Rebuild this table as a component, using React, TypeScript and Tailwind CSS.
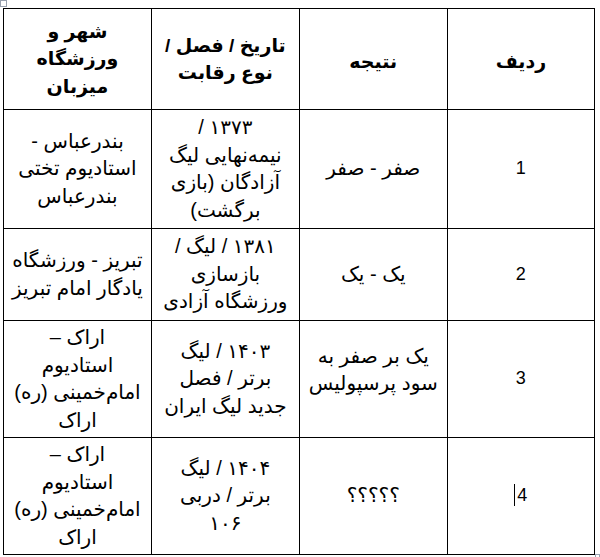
const font = { fontFamily: '"Liberation Sans", "DejaVu Sans", sans-serif' };

type Row = { no: string; result: string[]; date: string[]; venue: string[]; h: string; resultPad?: string };

const rows: Row[] = [
  {
    no: "1",
    result: ["صفر - صفر"],
    date: ["۱۳۷۳ /", "نیمه‌نهایی لیگ", "آزادگان (بازی", "برگشت)"],
    venue: ["بندرعباس -", "استادیوم تختی", "بندرعباس"],
    h: "h-[119px]",
  },
  {
    no: "2",
    result: ["یک - یک"],
    date: ["۱۳۸۱ / لیگ /", "بازسازی", "ورزشگاه آزادی"],
    venue: ["تبریز - ورزشگاه", "یادگار امام تبریز"],
    h: "h-[92px]",
  },
  {
    no: "3",
    result: ["یک بر صفر به", "سود پرسپولیس"],
    date: ["۱۴۰۳ / لیگ", "برتر / فصل", "جدید لیگ ایران"],
    venue: ["اراک –", "استادیوم", "امام‌خمینی (ره)", "اراک"],
    h: "h-[117px]",
    resultPad: "pb-[18px]",
  },
  {
    no: "4",
    result: ["؟؟؟؟؟"],
    date: ["۱۴۰۴ / لیگ", "برتر / دربی", "۱۰۶"],
    venue: ["اراک –", "استادیوم", "امام‌خمینی (ره)", "اراک"],
    h: "h-[117px]",
  },
];

const Lines = ({ lines }: { lines: string[] }) => (
  <>
    {lines.map((l, i) => (
      <div key={i} className="whitespace-nowrap">
        {l}
      </div>
    ))}
  </>
);

const cell = "border border-black align-middle text-center px-1 w-[148px]";

export default function App() {
  return (
    <div className="relative w-[600px] h-[557px] bg-white overflow-hidden" style={font}>
      {/* table move handle */}
      <div className="absolute left-0 top-0 w-[7px] h-[7px] border border-gray-400 bg-white" />
      <div className="pt-[8px] pl-[3px]">
        <table dir="rtl" className="border-collapse w-[592px] text-[20px] leading-[27.5px] text-black">
          <tbody>
            <tr className="h-[101px] font-bold text-[19px]">
              <td className={`${cell} pt-[6px]`}>ردیف</td>
              <td className={`${cell} pt-[6px]`}>نتیجه</td>
              <td className={cell}>
                <Lines lines={["تاریخ / فصل /", "نوع رقابت"]} />
              </td>
              <td className={cell}>
                <Lines lines={["شهر و", "ورزشگاه", "میزبان"]} />
              </td>
            </tr>
            {rows.map((r) => (
              <tr key={r.no} className={r.h}>
                <td className={`${cell} text-[18px]`}>
                  {r.no === "4" ? (
                    <span className="inline-block border-l border-black leading-[22px] pl-[2px]">4</span>
                  ) : (
                    r.no
                  )}
                </td>
                <td className={`${cell} ${r.resultPad ?? ""}`}>
                  <Lines lines={r.result} />
                </td>
                <td className={cell}>
                  <Lines lines={r.date} />
                </td>
                <td className={cell}>
                  <Lines lines={r.venue} />
                </td>
              </tr>
            ))}
          </tbody>
        </table>
      </div>
      {/* resize handle */}
      <div className="absolute left-[595px] top-[554px] w-[5px] h-[5px] border border-gray-400 bg-white" />
    </div>
  );
}
